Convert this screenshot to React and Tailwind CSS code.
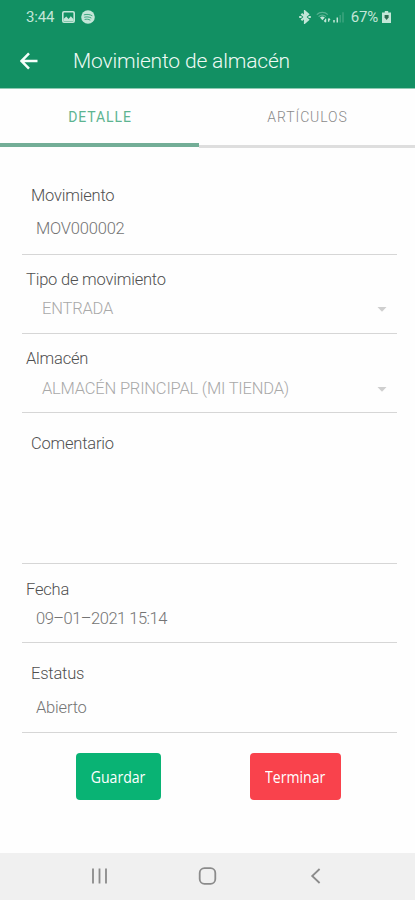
import React from 'react';
import clsx from 'clsx';

const FIELDS = [
  { label: 'Movimiento', value: 'MOV000002', box: 'h-[107px] pt-[38px]', labelCls: 'pl-[9px]', valueCls: 'mt-[13px] pl-[14px] text-[#747474]' },
  { label: 'Tipo de movimiento', value: 'ENTRADA', box: 'h-[79px] pt-[15px]', labelCls: 'pl-1', valueCls: 'mt-[9px] pl-5 text-[#a9a9a9]', select: true },
  { label: 'Almacén', value: 'ALMACÉN PRINCIPAL (MI TIENDA)', box: 'h-[79px] pt-[15px]', labelCls: 'pl-1', valueCls: 'mt-[10px] pl-5 text-[#a9a9a9]', select: true },
  { label: 'Comentario', value: '', box: 'h-[151px] pt-[21px]', labelCls: 'pl-[9px]', valueCls: 'mt-[10px]' },
  { label: 'Fecha', value: '09–01–2021 15:14', box: 'h-[79px] pt-[16px]', labelCls: 'pl-1', valueCls: 'mt-[9px] pl-[14px] tracking-[-0.5px] text-[#747474]' },
  { label: 'Estatus', value: 'Abierto', box: 'h-[90px] pt-[21px]', labelCls: 'pl-[9px]', valueCls: 'mt-[14px] pl-[14px] text-[#747474]' },
];

function StatusBar() {
  return (
    <div className="flex h-[34px] items-center pl-[26px] pr-6 text-[#c3e6d8]">
      <span className="text-[15px] leading-5 tracking-[-0.2px]">3:44</span>
      {/* Gallery */}
      <svg className="ml-[8px]" width="13" height="12" viewBox="0 0 13 12">
        <rect x="0.8" y="0.8" width="11.4" height="10.4" rx="1.2" fill="none" stroke="currentColor" strokeWidth="1.6" />
        <path d="M1.5 10.2V8l2.8-2.6L6.6 8l2.2-2.8 2.8 3v2z" fill="currentColor" />
      </svg>
      {/* Spotify */}
      <svg className="ml-[6px]" width="14" height="14" viewBox="0 0 14 14">
        <circle cx="7" cy="7" r="6.8" fill="currentColor" />
        <path d="M3.2 4.8c2.6-.8 5.4-.5 7.8.8M3.6 7.2c2.2-.6 4.4-.4 6.4.7M4 9.4c1.8-.4 3.5-.3 5 .6" fill="none" stroke="#129063" strokeWidth="1" strokeLinecap="round" opacity=".75" />
      </svg>
      <div className="ml-auto flex items-center">
        {/* Bluetooth */}
        <svg className="-mr-px" width="12" height="14" viewBox="0 0 12 14">
          <path d="M2.4 3.8 9 9.8 6 12.4V1.6L9 4.2l-6.6 6" fill="none" stroke="currentColor" strokeWidth="2.2" />
          <path d="M.2 7h2.4M9.4 7h2.4" stroke="currentColor" strokeWidth="2.2" />
        </svg>
        {/* Wifi */}
        <svg className="ml-[6px]" width="15" height="12" viewBox="0 0 15 12">
          <path d="M.8 3.6c3-3 8-3 11 0M2.6 5.6c2-2 5.4-2 7.4 0" fill="none" stroke="currentColor" strokeWidth="1.3" opacity=".4" />
          <path d="M4 6.4c1.4-1.3 3.4-1.3 4.8 0L6.4 9.2z" fill="currentColor" />
          <path d="M9.6 11.2V7.8M8.2 9.4l1.4 1.8M12.6 7.4v3.4M12.6 7.4l1.4 1.6" fill="none" stroke="currentColor" strokeWidth="1.3" />
        </svg>
        {/* Signal */}
        <svg className="ml-[2px]" width="11" height="12" viewBox="0 0 11 12">
          <path d="M1 11.5V9M4.3 11.5V6.5" stroke="currentColor" strokeWidth="1.5" />
          <path d="M7.2 11.5V4M10 11.5V1.2" stroke="currentColor" strokeWidth="1.4" opacity=".25" />
        </svg>
        <span className="ml-[7px] text-[15px] leading-5 tracking-[-0.2px]">67%</span>
        {/* Battery */}
        <svg className="ml-[4px]" width="9" height="12" viewBox="0 0 9 12">
          <path d="M2.8 0h3.4v1.4H9V12H0V1.4h2.8z" fill="currentColor" />
          <path d="M2.6 4h4v2.4L4.6 9l-2-2.6z" fill="#2b6b4f" />
        </svg>
      </div>
    </div>
  );
}

function Field({ field }) {
  return (
    <div className={clsx('border-b border-[#d6d6d6] text-[16.5px] font-light leading-5 tracking-[-0.2px]', field.box)}>
      <div className={clsx('text-[#505050]', field.labelCls)}>{field.label}</div>
      <div className={clsx('flex items-center justify-between', field.valueCls)}>
        <span>{field.value}</span>
        {field.select && (
          <svg className="mr-[10px]" width="10" height="5" viewBox="0 0 10 5">
            <path d="M.5 0h9L5 4.8z" fill="#cfcfcf" />
          </svg>
        )}
      </div>
    </div>
  );
}

function NavBar() {
  return (
    <div className="flex h-[47px] items-center bg-[#f0f0f0] pb-[2px] pl-[91px] text-[#8b8b8b]">
      <svg width="17" height="16" viewBox="0 0 17 16">
        <path d="M2 .5v15M8.5 .5v15M15 .5v15" stroke="currentColor" strokeWidth="1.8" />
      </svg>
      <svg className="ml-[90px]" width="19" height="18" viewBox="0 0 19 18">
        <rect x="1.7" y="1.2" width="15.6" height="15.6" rx="4.8" fill="none" stroke="currentColor" strokeWidth="1.8" />
      </svg>
      <svg className="ml-[93px]" width="11" height="16" viewBox="0 0 11 16">
        <path d="M9.6 1 2.2 8l7.4 7" fill="none" stroke="currentColor" strokeWidth="1.8" />
      </svg>
    </div>
  );
}

export default function App() {
  return (
    <div className="flex h-[900px] w-[415px] flex-col overflow-hidden bg-[#fefefe] font-['Roboto',sans-serif]">
      <header className="h-[89px] shrink-0 border-b border-[#8fcab3] bg-[#129063]">
        <StatusBar />
        <div className="flex h-[54px] items-center pl-5">
          <svg width="18" height="18" viewBox="0 0 18 18">
            <path d="M17.5 9H2M9 1.4 1.6 9 9 16.6" fill="none" stroke="#f4fffa" strokeWidth="2.5" />
          </svg>
          <h1 className="ml-[35px] text-[21px] font-light leading-6 tracking-[-0.17px] text-[#eefaf5]">Movimiento de almacén</h1>
        </div>
      </header>

      {/* Tabs */}
      <div className="flex h-[59px] shrink-0 text-[14px] leading-[56px] tracking-[0.9px]">
        <div className="h-[58px] w-[199px] border-b-4 border-[#73ae97] pl-px text-center text-[#5db491]">DETALLE</div>
        <div className="h-[59px] flex-1 border-b-[3px] border-[#dedede] pl-px text-center font-light text-[#8a8a8a]">ARTÍCULOS</div>
      </div>

      <main className="flex-1 pl-[22px] pr-[18px]">
        {FIELDS.map((f) => (
          <Field key={f.label} field={f} />
        ))}
        <div className="flex pl-[54px] pt-5 font-['Open_Sans',sans-serif] text-[16px] text-white">
          <button className="h-[47px] w-[85px] rounded-[4px] bg-[#09b374]">
            <span className="inline-block scale-x-[0.88]">Guardar</span>
          </button>
          <button className="ml-[89px] h-[47px] w-[91px] rounded-[4px] bg-[#f9424c]">
            <span className="inline-block scale-x-[0.88]">Terminar</span>
          </button>
        </div>
      </main>

      <NavBar />
    </div>
  );
}
